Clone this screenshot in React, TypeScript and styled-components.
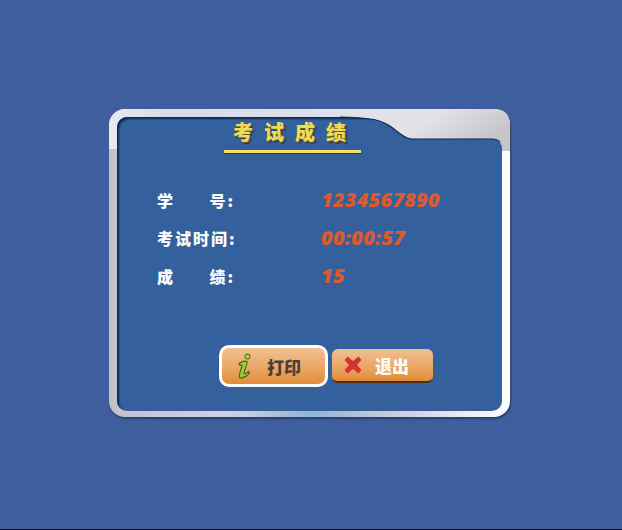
import React from "react";
import styled, { createGlobalStyle } from "styled-components";

const GlobalStyle = createGlobalStyle`
  html, body {
    margin: 0;
    padding: 0;
    background: #3e5e9e;
  }
`;

const rows = [
  { label: ["学", "号:"], value: "1234567890" },
  { label: ["考试时间:"], value: "00:00:57" },
  { label: ["成", "绩:"], value: "15" },
];

const App = () => (
  <>
    <GlobalStyle />
    <Page>
      <Frame>
        <FrameNotch viewBox="0 0 170 42" aria-hidden="true">
          <defs>
            <linearGradient id="notchFill" x1="0" y1="0" x2="1" y2="0.4">
              <stop offset="0" stopColor="#dfe2ea" />
              <stop offset="0.55" stopColor="#e2e2e6" />
              <stop offset="1" stopColor="#c6c6ca" />
            </linearGradient>
          </defs>
          <path
            d="M0 0H154Q170 0 170 16V42H162V38Q160 30 152 30H72C60 30 54 14 34 10.5C22 8.5 10 8 0 8Z"
            fill="url(#notchFill)"
          />
          <path
            d="M0 8C10 8 22 8.5 34 10.5C54 14 60 30 72 30H152Q157 30 160 33"
            fill="none"
            stroke="#14264c"
            strokeWidth="1.2"
          />
        </FrameNotch>
        <Panel>
          <TitleBlock>
            <Title>考试成绩</Title>
            <TitleRule />
          </TitleBlock>
          <InfoList>
            {rows.map((row) => (
              <InfoRow key={row.value}>
                <InfoLabel $spread={row.label.length > 1}>
                  {row.label.map((part) => (
                    <span key={part}>{part}</span>
                  ))}
                </InfoLabel>
                <InfoValue>{row.value}</InfoValue>
              </InfoRow>
            ))}
          </InfoList>
          <Actions>
            <ActionButton $focused $dark>
              <svg width="16" height="26" viewBox="0 0 16 26" aria-hidden="true">
                <circle cx="10.5" cy="3.5" r="2.6" fill="#a9d63c" stroke="#41600e" strokeWidth="1" />
                <path
                  d="M2 10.5C4.5 8.5 9 7.5 10 8.5C11 10 7 18 7 20.5C7 22 10 20 11.5 18.5L12.5 20C10 23.5 4.5 26 2.5 24.5C1 23 5 14.5 5 12.5C5 11.5 3.5 12 3 12.4Z"
                  fill="#9ccc33"
                  stroke="#41600e"
                  strokeWidth="1.1"
                />
              </svg>
              <span>打印</span>
            </ActionButton>
            <ActionButton>
              <svg width="18" height="18" viewBox="0 0 18 18" aria-hidden="true">
                <path
                  d="M3.5 0.5L9 5L14.5 0.5L17.5 4L13 9L17.5 14L14.5 17.5L9 13L3.5 17.5L0.5 14L5 9L0.5 4Z"
                  fill="#d23434"
                />
              </svg>
              <span>退出</span>
            </ActionButton>
          </Actions>
        </Panel>
      </Frame>
    </Page>
  </>
);

export default App;

const Page = styled.div`
  box-sizing: border-box;
  width: 622px;
  height: 530px;
  padding: 109px 0 0 109px;
  background: #3e5e9e;
  border-bottom: 1px solid #0a1240;
  overflow: hidden;
`;

const Frame = styled.div`
  position: relative;
  box-sizing: border-box;
  width: 401px;
  height: 308px;
  padding: 8px 8px 6px 8px;
  border-radius: 16px;
  background: linear-gradient(
    90deg,
    #c0c2c6 0%,
    #d2d4d8 30%,
    #8fb4d8 50%,
    #d2d4d8 75%,
    #ffffff 100%
  );
  box-shadow: 1px 2px 2px #2c3f6c;

  &::before {
    content: "";
    position: absolute;
    top: 0;
    left: 0;
    right: 130px;
    height: 40px;
    border-radius: 16px 0 0 0;
    background: linear-gradient(90deg, #e6eaf0 0%, #d8dce4 20%, #dfe2ea 100%);
  }
`;

const FrameNotch = styled.svg`
  position: absolute;
  top: 0;
  right: 0;
  width: 170px;
  height: 42px;
  z-index: 2;
`;

const Panel = styled.div`
  position: relative;
  box-sizing: border-box;
  height: 100%;
  padding-top: 3px;
  border-radius: 10px;
  background: #34619d;
  box-shadow: inset 2px 2px 2px #12264f;
  z-index: 1;
  font-family: "Noto Sans CJK SC", "Liberation Sans", sans-serif;
`;

const TitleBlock = styled.div`
  width: 137px;
  margin-left: 107px;
`;

const Title = styled.div`
  font-size: 20px;
  line-height: 24px;
  font-weight: 900;
  letter-spacing: 11px;
  padding-left: 9px;
  white-space: nowrap;
  color: #eeda5c;
  text-shadow: 1px 1px 0 #6b5a1c, 2px 2px 1px #1d3763;
`;

const TitleRule = styled.div`
  height: 3px;
  margin-top: 6px;
  background: #f2e268;
  box-shadow: 0 1px 1px #1d3763;
`;

const InfoList = styled.div`
  display: flex;
  flex-direction: column;
  gap: 14px;
  margin-top: 35px;
  padding-left: 40px;
`;

const InfoRow = styled.div`
  display: flex;
  align-items: center;
  height: 24px;
`;

const InfoLabel = styled.div<{ $spread?: boolean }>`
  display: flex;
  justify-content: ${(p) => (p.$spread ? "space-between" : "flex-start")};
  width: 78px;
  margin-right: 86px;
  font-size: 16px;
  font-weight: 900;
  letter-spacing: 2px;
  color: #ffffff;
  white-space: nowrap;
`;

const InfoValue = styled.div`
  margin-bottom: 2px;
  font-family: "Open Sans", "Liberation Sans", sans-serif;
  font-size: 20px;
  font-weight: 800;
  font-style: italic;
  letter-spacing: 0.3px;
  color: #dc5a30;
`;

const Actions = styled.div`
  display: flex;
  align-items: center;
  gap: 4px;
  margin-top: 57px;
  padding-left: 102px;
`;

const ActionButton = styled.div<{ $focused?: boolean; $dark?: boolean }>`
  box-sizing: border-box;
  display: flex;
  align-items: center;
  width: ${(p) => (p.$focused ? "109px" : "101px")};
  height: ${(p) => (p.$focused ? "42px" : "34px")};
  padding-left: ${(p) => (p.$focused ? "15px" : "12px")};
  gap: ${(p) => (p.$focused ? "14px" : "13px")};
  border-radius: ${(p) => (p.$focused ? "10px" : "6px")};
  border: ${(p) => (p.$focused ? "3px solid #ffffff" : "none")};
  border-bottom: ${(p) => (p.$focused ? "3px solid #ffffff" : "2px solid #4f2c0a")};
  background: linear-gradient(180deg, #f0c092 0%, #eba765 55%, #e08c3a 100%);
  font-size: 17px;
  font-weight: 900;
  color: ${(p) => (p.$dark ? "#4a4038" : "#ffffff")};
`;
